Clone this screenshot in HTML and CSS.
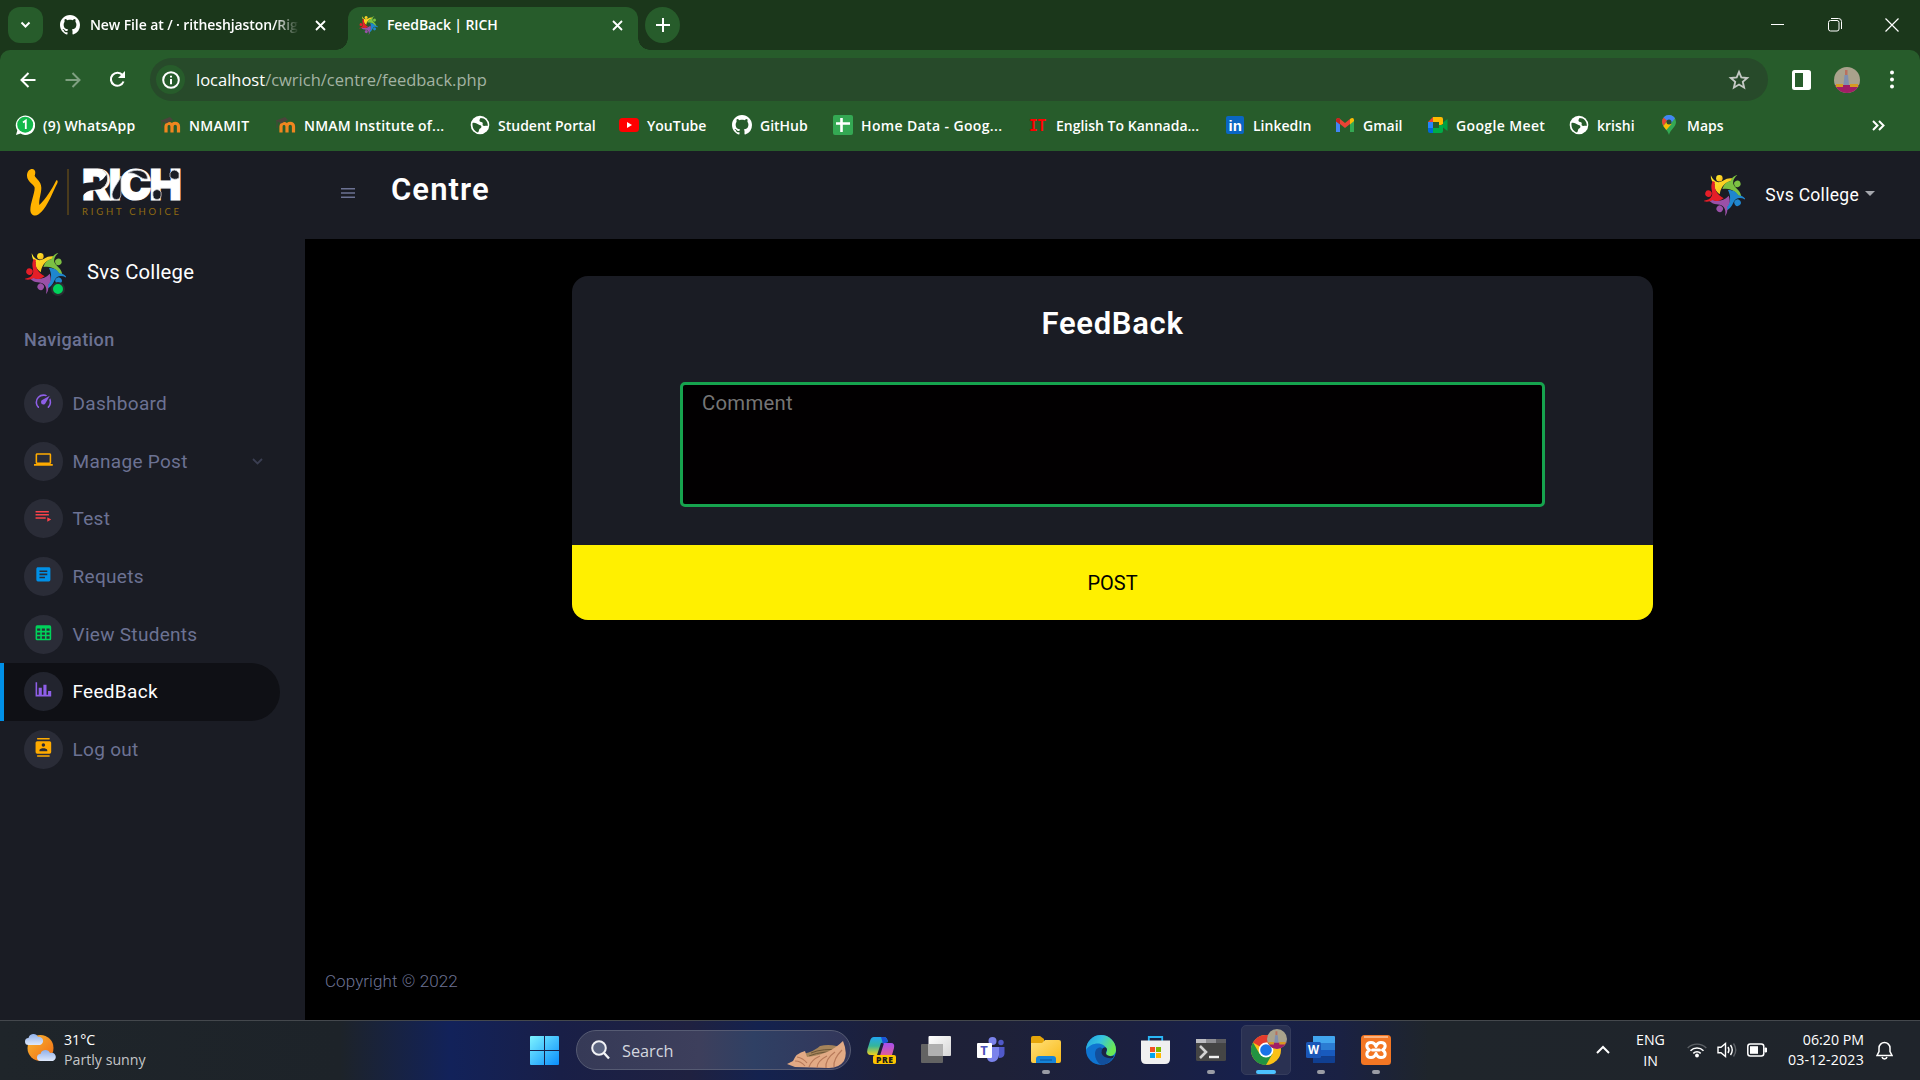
FILE: index.html
```html
<!DOCTYPE html>
<html lang="en">
<head>
<meta charset="utf-8">
<title>FeedBack | RICH</title>
<link rel="stylesheet" href="styles.css">
</head>
<body>
<svg class="defs" width="0" height="0" aria-hidden="true">
  <defs>
    <linearGradient id="gYellow" x1="0" y1="0" x2="1" y2="1"><stop offset="0" stop-color="#fff02a"/><stop offset="1" stop-color="#f5b21c"/></linearGradient>
    <linearGradient id="gStart" x1="0" y1="0" x2="1" y2="1"><stop offset="0" stop-color="#7df3ff"/><stop offset="1" stop-color="#0a8dfb"/></linearGradient>
    <linearGradient id="gSun" x1="0" y1="0" x2="1" y2="1"><stop offset="0" stop-color="#f7b733"/><stop offset="1" stop-color="#f26a12"/></linearGradient>
    <linearGradient id="gCloud" x1="0" y1="0" x2="0" y2="1"><stop offset="0" stop-color="#8fb0ea"/><stop offset="1" stop-color="#dfe9fb"/></linearGradient>
    <linearGradient id="gFolder" x1="0" y1="0" x2="1" y2="1"><stop offset="0" stop-color="#ffe07a"/><stop offset="1" stop-color="#f9b916"/></linearGradient>
    <linearGradient id="gEdge" x1="0" y1="0" x2="1" y2="0.4"><stop offset="0" stop-color="#1f9fdf"/><stop offset=".5" stop-color="#35c3e0"/><stop offset="1" stop-color="#6be854"/></linearGradient>
    <linearGradient id="gCopA" x1="0" y1="0" x2="0" y2="1"><stop offset="0" stop-color="#22a6f0"/><stop offset=".5" stop-color="#35b59a"/><stop offset="1" stop-color="#f0d21c"/></linearGradient>
    <linearGradient id="gCopB" x1="0" y1="0" x2="0" y2="1"><stop offset="0" stop-color="#a64ff0"/><stop offset="1" stop-color="#f2607e"/></linearGradient>
    <linearGradient id="gView" x1="0" y1="0" x2="1" y2="1"><stop offset="0" stop-color="#ffffff"/><stop offset="1" stop-color="#d6d6d6"/></linearGradient>
    <path id="person" d="M20 1C25 13 32 20 42 21C56 21 62 7 84 10L83 17C66 20 50 30 46 56C32 46 29 36 31 27C24 20 19 12 20 1Z"/>
  </defs>
  <symbol id="ring" viewBox="0 0 120 120">
    <g fill="url(#gYellow)"><use href="#person"/><circle cx="45" cy="9.500" r="9.500"/></g>
    <g fill="#7cc142" transform="rotate(72 60 54)"><use href="#person"/><circle cx="45" cy="9.500" r="9.500"/></g>
    <g fill="#1f86cf" transform="rotate(144 60 54)"><use href="#person"/><circle cx="45" cy="9.500" r="9.500"/></g>
    <g fill="#9a50a8" transform="rotate(216 60 54)"><use href="#person"/><circle cx="45" cy="9.500" r="9.500"/></g>
    <g fill="#e61e28" transform="rotate(288 60 54)"><use href="#person"/><circle cx="45" cy="9.500" r="9.500"/></g>
  </symbol>
  <symbol id="github" viewBox="0 0 16 16"><path fill="#fff" d="M8 0C3.580 0 0 3.580 0 8c0 3.540 2.290 6.530 5.470 7.590.4.070.55-.17.55-.38 0-.19-.01-.82-.01-1.490-2.010.37-2.530-.49-2.690-.94-.09-.23-.48-.94-.82-1.130-.28-.15-.68-.52-.01-.53.63-.01 1.080.58 1.230.82.72 1.210 1.870.87 2.330.66.070-.52.280-.87.510-1.070-1.780-.2-3.640-.89-3.640-3.950 0-.87.310-1.590.82-2.150-.08-.2-.36-1.020.08-2.120 0 0 .67-.21 2.200.82.640-.18 1.320-.27 2-.27s1.360.09 2 .27c1.530-1.040 2.200-.82 2.200-.82.440 1.100.160 1.920.080 2.120.510.560.820 1.270.820 2.150 0 3.070-1.870 3.750-3.650 3.950.290.250.540.730.540 1.480 0 1.070-.01 1.930-.01 2.200 0 .21.150.46.550.38A8.010 8.010 0 0 0 16 8c0-4.420-3.580-8-8-8z"/></symbol>
  <symbol id="moodle" viewBox="0 0 20 20"><path d="M5 17.500V11.500A2.900 2.900 0 0 1 11 11.500V17.500M11 17.500V11.500A2.900 2.900 0 0 1 17.500 11.500V17.500" fill="none" stroke="#f0861f" stroke-width="3.200"/><path d="M0 5.500L9 2L12 5L5 8.500Z" fill="#4a443b"/><path d="M1 5V13" stroke="#4a443b"/></symbol>
  <symbol id="globe" viewBox="0 0 20 20"><circle cx="10" cy="10" r="9.300" fill="#fff"/><path d="M2.500 8C5 7 7 9 9.500 10C12 10 12 13 10 13.500C8.500 14 9.500 16 8 17.500C4.500 16.500 2 13 2.500 8ZM10.500 3C9 5 9 6.500 11 7C13 7 13 8.500 12.500 10C14 12 16 10 17.800 11C18 6.500 15 3 10.500 3Z" fill="#275c2b"/></symbol>
  <symbol id="face" viewBox="0 0 26 26"><clipPath id="cf"><circle cx="13" cy="13" r="13"/></clipPath><g clip-path="url(#cf)"><path fill="#a9a28c" d="M0 0H26V26H0Z"/><path fill="#b9705f" d="M11 3H13.500V8H11Z"/><path fill="#7f8fb0" d="M10.500 8H14L15 18H9.500Z"/><path fill="#a01e66" d="M0 18H26V26H0Z"/><path fill="#d69a22" d="M2 17H9V20H2ZM16 17H24V20H16Z"/></g></symbol>
</svg>

<header class="browser">
  <div class="tabstrip">
    <span class="tab-search"><svg width="11" height="8" viewBox="0 0 11 8"><path d="M1.500 1.500L5.500 5.500L9.500 1.500" fill="none" stroke="#fff" stroke-width="2"/></svg></span>
    <div class="tab tab-idle">
      <svg width="20" height="20"><use href="#github"/></svg>
      <span class="tab-title faded">New File at / · ritheshjaston/Rig</span>
      <svg class="x" width="11" height="11" viewBox="0 0 11 11"><path d="M1 1L10 10M10 1L1 10" stroke="#fff" stroke-width="1.800"/></svg>
    </div>
    <div class="tab tab-active">
      <svg width="19" height="19"><use href="#ring"/></svg>
      <span class="tab-title">FeedBack | RICH</span>
      <svg class="x" width="11" height="11" viewBox="0 0 11 11"><path d="M1 1L10 10M10 1L1 10" stroke="#fff" stroke-width="1.800"/></svg>
    </div>
    <span class="tab-new"><svg width="14" height="14" viewBox="0 0 14 14"><path d="M7 0V14M0 7H14" stroke="#fff" stroke-width="2"/></svg></span>
    <div class="window-controls">
      <svg width="14" height="14" viewBox="0 0 14 14"><path d="M0 6.500H13" stroke="#fff"/></svg>
      <svg width="14" height="14" viewBox="0 0 14 14"><rect x=".5" y="2.500" width="10.500" height="10.500" rx="2" fill="none" stroke="#fff"/><path d="M3 .5H10.500Q13.500 .5 13.500 3.500V11" fill="none" stroke="#fff"/></svg>
      <svg width="14" height="14" viewBox="0 0 14 14"><path d="M.5 .5L13.500 13.500M13.500 .5L.5 13.500" stroke="#fff" stroke-width="1.200"/></svg>
    </div>
  </div>

  <div class="toolbar">
    <svg width="16" height="16" viewBox="0 0 16 16"><path d="M8.500 1L1.500 8L8.500 15M1.500 8H15.500" fill="none" stroke="#fff" stroke-width="2"/></svg>
    <svg width="16" height="16" viewBox="0 0 16 16"><path d="M7.500 1L14.500 8L7.500 15M14.500 8H.5" fill="none" stroke="#7fa081" stroke-width="2"/></svg>
    <svg width="17" height="17" viewBox="0 0 17 17"><path d="M14.500 10.500A6.500 6.500 0 1 1 13.500 4.200L15 6" fill="none" stroke="#fff" stroke-width="2.100"/><path d="M16 0V7H9Z" fill="#fff"/></svg>
    <div class="omnibox">
      <span class="site-info"><svg width="18" height="18" viewBox="0 0 18 18"><circle cx="9" cy="9" r="7.800" fill="none" stroke="#fff" stroke-width="2"/><path d="M9 8V13.200M9 4.700V6.600" stroke="#fff" stroke-width="2"/></svg></span>
      <span class="url"><b>localhost</b>/cwrich/centre/feedback.php</span>
      <svg class="star" width="22" height="22" viewBox="0 0 24 24"><path d="M12 3.200L14.500 9.200L21 9.800L16.100 14L17.600 20.400L12 17L6.400 20.400L7.900 14L3 9.800L9.500 9.200Z" fill="none" stroke="#c4c9c4" stroke-width="2"/></svg>
    </div>
    <svg width="19" height="20" viewBox="0 0 19 20"><rect width="19" height="20" rx="2.500" fill="#fff"/><path d="M3 3H11V17H3Z" fill="#275c2b"/></svg>
    <svg width="26" height="26"><use href="#face"/></svg>
    <svg width="4" height="19" viewBox="0 0 4 19"><g fill="#fff"><circle cx="2" cy="2.500" r="2"/><circle cx="2" cy="9.500" r="2"/><circle cx="2" cy="16.500" r="2"/></g></svg>
  </div>

  <nav class="bookmarks">
    <a class="wide"><svg width="20" height="20" viewBox="0 0 20 20"><path d="M1 20L2.300 15.500A9.700 9.700 0 1 1 5.500 18.600Z" fill="#fff"/><circle cx="10.200" cy="9.700" r="8" fill="#12b84a"/><path d="M8 7.500L10.800 5.500V14" fill="none" stroke="#fff" stroke-width="1.800"/></svg><span>(9) WhatsApp</span></a>
    <a class="wider"><svg width="20" height="20"><use href="#moodle"/></svg><span>NMAMIT</span></a>
    <a class="wide"><svg width="20" height="20"><use href="#moodle"/></svg><span>NMAM Institute of...</span></a>
    <a><svg width="20" height="20"><use href="#globe"/></svg><span>Student Portal</span></a>
    <a><svg width="20" height="20" viewBox="0 0 20 20"><rect y="3" width="20" height="14" rx="3.500" fill="#f00"/><path d="M8 7L13 10L8 13Z" fill="#fff"/></svg><span>YouTube</span></a>
    <a><svg width="20" height="20"><use href="#github"/></svg><span>GitHub</span></a>
    <a class="wider"><svg width="20" height="20" viewBox="0 0 20 20"><rect width="20" height="20" rx="2" fill="#34a853"/><path d="M8.500 3V17M3 8.500H17" stroke="#fff" stroke-width="2.600"/></svg><span>Home Data - Goog...</span></a>
    <a><svg width="20" height="20" viewBox="0 0 20 20"><text x="1" y="16" font-family="Liberation Mono" font-weight="700" font-size="18" textLength="17" lengthAdjust="spacingAndGlyphs" fill="#f00">IT</text></svg><span>English To Kannada...</span></a>
    <a><svg width="20" height="20" viewBox="0 0 20 20"><rect x="1" y="1" width="18" height="18" rx="2" fill="#0a66c2"/><text x="3.500" y="15.500" font-family="Liberation Sans" font-weight="700" font-size="15" fill="#fff">in</text></svg><span>LinkedIn</span></a>
    <a><svg width="20" height="20" viewBox="0 0 20 20"><path d="M1 5V17H5V9Z" fill="#4285f4"/><path d="M19 5V17H15V9Z" fill="#34a853"/><path d="M1 4.500Q3 2 5 4L10 8L15 4V9L10 13L5 9L1 6Z" fill="#ea4335"/><path d="M15 4Q18 2 19 4.500V6L15 9.500Z" fill="#fbbc04"/><path d="M1 4.500Q3 2 5 4V9.500L1 6.500Z" fill="#c5221f"/></svg><span>Gmail</span></a>
    <a class="wider"><svg width="20" height="20" viewBox="0 0 20 20"><path d="M0 7H5V13H0Z" fill="#2684fc"/><path d="M5 2V7H0Z" fill="#ea4335"/><path d="M5 2H13Q15 2 15 4V9L11 11V7H5Z" fill="#ffba00"/><path d="M0 13H5V18H2Q0 18 0 16Z" fill="#0066da"/><path d="M5 13H11V10H15V16Q15 18 13 18H5Z" fill="#00ac47"/><path d="M15 7.500L19.500 4V16L15 12.500Z" fill="#00a043"/></svg><span>Google Meet</span></a>
    <a><svg width="20" height="20"><use href="#globe"/></svg><span>krishi</span></a>
    <a><svg width="20" height="20" viewBox="0 0 20 20"><path d="M10 20C9 15 3 12 3 7A7 7 0 0 1 17 7C17 12 11 15 10 20Z" fill="#34a853"/><path d="M4.500 2.700A7 7 0 0 1 16 3.300L11 9.500L7 5.500Z" fill="#4285f4"/><path d="M4.500 2.700L8 5.500L4.500 11C2.500 8 2.500 5 4.500 2.700Z" fill="#ea4335"/><path d="M4.300 11L9 5.500L12.500 9L7.300 15Z" fill="#fbbc04"/><circle cx="10" cy="7" r="2.500" fill="#2b4b35"/></svg><span>Maps</span></a>
    <svg class="more" width="13" height="11" viewBox="0 0 13 11"><path d="M1 1L5.500 5.500L1 10M7 1L11.500 5.500L7 10" fill="none" stroke="#fff" stroke-width="2"/></svg>
  </nav>
</header>

<div class="app">
  <aside class="sidebar">
    <div class="brand">
      <svg class="mark" width="44" height="50" viewBox="0 0 132 150"><path fill="#ffb300" d="M22 3C31 5 33 13 29 23C33 33 49 39 49 59C49 77 41 93 43 111C63 93 81 63 94 37C100 35 99 45 93 53C77 87 63 123 41 139C29 147 16 141 16 125C16 105 29 77 29 59C29 51 6 41 6 23C6 11 13 3 22 3Z"/><path d="M129 3V141" stroke="#7a5a14" stroke-width="3"/></svg>
      <div class="wordmark">
        <span class="rich">RICH</span>
        <span class="tagline">RIGHT CHOICE</span>
        <svg class="inlay" width="98" height="33" viewBox="0 0 98 33"><g fill="#1a1c24" stroke="#c9cbd0" stroke-width=".8"><path d="M0 16C6 13 16 16 21 11L25 6Q27 16 19 21L12 22Q4 22 0 29Z" stroke="none"/><path d="M20 1.500Q27 6 25.500 14Q24 19 19 21" fill="none"/><path d="M39 8V25Q39 31.500 34.500 31.500Q30 31.500 30 26C32 18 36 16 39 8Z"/><path d="M46 5C53 0 66 2 65.500 11C58 12 56 4 46 5Z"/><path d="M71 24Q75 19 79 24Q80 31.500 75 31.500Q70 31.500 71 24Z"/><path d="M88 9V5Q92 -1 97 5V10Q92 13 88 9Z"/></g></svg>
      </div>
    </div>
    <div class="profile">
      <span class="avatar"><svg width="41" height="41"><use href="#ring"/></svg><i class="online"></i></span>
      <span class="name">Svs College</span>
    </div>
    <p class="nav-head">Navigation</p>
    <ul class="menu">
      <li><span class="ico violet"><svg viewBox="0 0 24 24"><path d="M12,16A3,3 0 0,1 9,13C9,11.880 9.610,10.900 10.500,10.390L20.210,4.770L14.680,14.350C14.180,15.330 13.170,16 12,16M12,3C13.810,3 15.500,3.500 16.970,4.320L14.870,5.530C14,5.190 13,5 12,5A8,8 0 0,0 4,13C4,15.210 4.890,17.210 6.340,18.650H6.350C6.740,19.040 6.740,19.670 6.350,20.060C5.960,20.450 5.320,20.450 4.930,20.070V20.070C3.120,18.260 2,15.760 2,13A10,10 0 0,1 12,3M22,13C22,15.760 20.880,18.260 19.070,20.070V20.070C18.680,20.450 18.050,20.450 17.660,20.060C17.270,19.670 17.270,19.040 17.660,18.650V18.650C19.110,17.200 20,15.210 20,13C20,12 19.810,11 19.460,10.100L20.670,8C21.500,9.500 22,11.180 22,13Z"/></svg></span><span>Dashboard</span></li>
      <li><span class="ico amber"><svg viewBox="0 0 24 24"><path d="M4,6H20V16H4M20,18A2,2 0 0,0 22,16V6C22,4.890 21.100,4 20,4H4C2.890,4 2,4.890 2,6V16A2,2 0 0,0 4,18H0V20H24V18H20Z"/></svg></span><span>Manage Post</span><svg class="arrow" width="11" height="7" viewBox="0 0 11 7"><path d="M1 1L5.500 5.500L10 1" fill="none" stroke="#3b3e52" stroke-width="1.800"/></svg></li>
      <li><span class="ico red"><svg viewBox="0 0 24 24"><path d="M19,9H2V11H19V9M19,5H2V7H19V5M2,15H15V13H2V15M17,13V19L22,16L17,13Z"/></svg></span><span>Test</span></li>
      <li><span class="ico blue"><svg viewBox="0 0 24 24"><path d="M14,17H7V15H14M17,13H7V11H17M17,9H7V7H17M19,3H5C3.890,3 3,3.890 3,5V19A2,2 0 0,0 5,21H19A2,2 0 0,0 21,19V5C21,3.890 20.100,3 19,3Z"/></svg></span><span>Requets</span></li>
      <li><span class="ico green"><svg viewBox="0 0 24 24"><path d="M4,3H20A2,2 0 0,1 22,5V20A2,2 0 0,1 20,22H4A2,2 0 0,1 2,20V5A2,2 0 0,1 4,3M4,7V10H8V7H4M10,7V10H14V7H10M20,10V7H16V10H20M4,12V15H8V12H4M4,20H8V17H4V20M10,12V15H14V12H10M10,20H14V17H10V20M20,20V17H16V20H20M20,12H16V15H20V12Z"/></svg></span><span>View Students</span></li>
      <li class="active"><span class="ico violet"><svg viewBox="0 0 24 24"><path d="M22,21H2V3H4V19H6V10H10V19H12V6H16V19H18V14H22V21Z"/></svg></span><span>FeedBack</span></li>
      <li><span class="ico amber"><svg viewBox="0 0 24 24"><path d="M20,0H4V2H20V0M4,24H20V22H4V24M20,4H4A2,2 0 0,0 2,6V18A2,2 0 0,0 4,20H20A2,2 0 0,0 22,18V6A2,2 0 0,0 20,4M12,6.750A2.250,2.250 0 0,1 14.250,9A2.250,2.250 0 0,1 12,11.250A2.250,2.250 0 0,1 9.750,9A2.250,2.250 0 0,1 12,6.750M17,17H7V15.500C7,13.830 10.330,13 12,13C13.670,13 17,13.830 17,15.500V17Z"/></svg></span><span>Log out</span></li>
    </ul>
  </aside>
  <div class="content">
    <div class="topbar">
      <svg class="burger" width="14" height="10" viewBox="0 0 14 10"><path d="M0 .75H14M0 5H14M0 9.250H14" stroke="#6c7293" stroke-width="1.500"/></svg>
      <h1>Centre</h1>
      <div class="user">
        <svg width="41" height="41"><use href="#ring"/></svg>
        <span class="user-name">Svs College</span>
        <i class="caret"></i>
      </div>
    </div>
    <main>
      <form class="card">
        <h2>FeedBack</h2>
        <div class="comment"><span>Comment</span></div>
        <div class="post"><span>POST</span></div>
      </form>
      <footer><span>Copyright © 2022</span></footer>
    </main>
  </div>
</div>

<div class="taskbar">
  <div class="weather">
    <svg width="31" height="30" viewBox="0 0 31 30"><circle cx="15.500" cy="15" r="13" fill="url(#gSun)"/><path d="M3.500 12A3.500 3.500 0 0 1 3.500 5A5 5 0 0 1 13 4A4 4 0 0 1 15 12Z" fill="url(#gCloud)"/><path d="M15.500 28A3.500 3.500 0 0 1 15.500 21A5 5 0 0 1 25 20A4 4 0 0 1 28 28Z" fill="url(#gCloud)"/></svg>
    <div class="weather-text"><span>31°C</span><span class="dim">Partly sunny</span></div>
  </div>
  <div class="dock">
    <svg class="start" width="29" height="29" viewBox="0 0 29 29"><path fill="url(#gStart)" d="M1 0H14V14H0V1Q0 0 1 0ZM15 0H28Q29 0 29 1V14H15ZM0 15H14V29H1Q0 29 0 28ZM15 15H29V28Q29 29 28 29H15Z"/></svg>
    <div class="search">
      <svg width="19" height="20" viewBox="0 0 19 20"><circle cx="8" cy="8" r="6.800" fill="#5b6480" stroke="#f2f3f6" stroke-width="2"/><path d="M13 13L18 18.500" stroke="#f2f3f6" stroke-width="2.400"/></svg>
      <span class="search-text">Search</span>
      <svg class="shells" width="60" height="28" viewBox="0 0 60 28"><path d="M16 13Q28 10 33 5Q45 2 58 8L56 20H20Z" fill="#a5835a"/><path d="M24 12Q35 7 55 9M22 15Q36 9 55 12" stroke="#6d5638" fill="none"/><path d="M0 23L6 20Q9 12 18 10L20 16Q42 14 56 0Q61 12 57 20Q52 27 42 27L8 26Z" fill="#e2aa85"/><path d="M8 20Q14 20 18 25M10 16Q16 17 20 22M22 26Q24 19 33 15M30 27Q30 20 40 15M39 27Q38 18 48 11M47 26Q46 18 55 9" stroke="#b87a5a" stroke-width="1.200" fill="none"/></svg>
    </div>
    <div class="app-icon"><svg width="30" height="30" viewBox="0 0 30 30"><path d="M8 2H18Q21 2 22 7L15 8L11 20H5Q0 20 1.500 14L4 6Q5 2 8 2Z" fill="url(#gCopA)"/><path d="M15 2H18Q21 2 22 7L17 9Z" fill="#1b55d8"/><path d="M18 8H25Q29 8 28 13L26 20Q25 24 20 24H13Z" fill="url(#gCopB)"/><rect x="7" y="20" width="23" height="9" rx="2" fill="#fdc400"/><text x="10" y="27.500" font-family="Open Sans" font-weight="800" font-size="8.500" textLength="17" fill="#1a1a1a">PRE</text></svg></div>
    <div class="app-icon"><svg width="30" height="30" viewBox="0 0 30 30"><rect y="9" width="22" height="19" rx="1" fill="#636363"/><rect x="7.500" y="1" width="22.500" height="20" rx="1" fill="url(#gView)"/><path d="M7.500 9H22V21H7.500Z" fill="#b0b0b0"/></svg></div>
    <div class="app-icon"><svg width="28" height="28" viewBox="0 0 28 28"><circle cx="15.500" cy="5" r="4" fill="#7b83eb"/><circle cx="24" cy="6.500" r="2.700" fill="#5059c9"/><path d="M20 11H27.500V18Q27 22 22 22Z" fill="#5059c9"/><path d="M10 11H22V19Q21 26 15 26Q11 26 10 22Z" fill="#7b83eb"/><rect x="0" y="7" width="15" height="15" rx="1" fill="#fff"/><text x="3.300" y="19" font-family="Open Sans" font-weight="700" font-size="13" fill="#4b53bc">T</text></svg></div>
    <div class="app-icon open"><svg width="30" height="30" viewBox="0 0 30 30"><path d="M0 3Q0 1 2 1H9L13 4V12H0Z" fill="#e5a50a"/><path d="M0 8H11L14 5H28Q30 5 30 7V26Q30 28 28 28H2Q0 28 0 26Z" fill="url(#gFolder)"/><path d="M5 28V24Q5 21 8 21H22Q25 21 25 24V28Z" fill="#1583d8"/><path d="M9 25H21" stroke="#0b5ba8" stroke-width="1.300"/></svg></div>
    <div class="app-icon"><svg width="30" height="30" viewBox="0 0 30 30"><circle cx="15" cy="15" r="15" fill="#0f74d1"/><path d="M0 15A15 15 0 0 1 30 15C30 19 26 22 22 21C18 20 21 18 21 15C19 7 6 6 0 15Z" fill="url(#gEdge)"/><path d="M9 19C9 12 15 11 17 14C13 18 20 26 28 21Q23 30 15 30Q9 26 9 19Z" fill="#124f9c"/><path d="M17 13Q21 11 21 15Q19 18 21 20Q24 22 28 20.500L27 23Q17 24 15.500 18Q15 15 17 13Z" fill="#1b2444"/></svg></div>
    <div class="app-icon"><svg width="29" height="30" viewBox="0 0 29 30"><path d="M7.800 7V2H21.200V7" fill="none" stroke="#29b6f6" stroke-width="1.800"/><path d="M0 5.500H29V24Q29 29 24 29H5Q0 29 0 24Z" fill="#f0f0f0"/><path d="M9 12H14V17H9Z" fill="#f25022"/><path d="M15 12H20V17H15Z" fill="#7fba00"/><path d="M9 18H14V23H9Z" fill="#00a4ef"/><path d="M15 18H20V23H15Z" fill="#ffb900"/></svg></div>
    <div class="app-icon open"><svg width="30" height="30" viewBox="0 0 30 30"><rect y="4" width="30" height="22" rx="1.500" fill="#454545"/><path d="M0 4H10V8H0Z" fill="#bdbdc2"/><path d="M10 4H20V8H10Z" fill="#8d8d92"/><path d="M20 4H30V8H20Z" fill="#5d5d62"/><path d="M4 11L10 17L4 23" fill="none" stroke="#d2d2d2" stroke-width="2.600"/><path d="M13 22H23" stroke="#f0f0f0" stroke-width="2.400"/></svg></div>
    <div class="app-icon current"><svg width="30" height="30" viewBox="0 0 30 30"><circle cx="15" cy="15" r="15" fill="#fbc116"/><path d="M15 15L2 7.500A15 15 0 0 1 28 7.500H15Z" fill="#e33b2e"/><path d="M2 7.500A15 15 0 0 0 15 30L21.500 18.700L8.500 18.700Z" fill="#229342"/><circle cx="15" cy="15" r="7.400" fill="#fff"/><circle cx="15" cy="15" r="5.800" fill="#1a73e8"/></svg><svg class="badge" width="20" height="20"><use href="#face"/></svg></div>
    <div class="app-icon open"><svg width="30" height="30" viewBox="0 0 30 30"><path d="M7 1H28Q29 1 29 2V8H7Z" fill="#41a5ee"/><path d="M7 8H29V15H7Z" fill="#2b7cd3"/><path d="M7 15H29V21.500H7Z" fill="#185abd"/><path d="M7 21.500H29V27Q29 28 28 28H7Z" fill="#103f91"/><rect y="7" width="15" height="16" rx="1.500" fill="#1a57b8"/><text x="2" y="19" font-family="Open Sans" font-weight="700" font-size="11.500" fill="#fff">W</text></svg></div>
    <div class="app-icon open"><svg width="30" height="30" viewBox="0 0 30 30"><rect width="30" height="30" rx="3.500" fill="#f37623"/><path d="M3 2H27" stroke="#fbb27f" stroke-width="2"/><path d="M15 11.500C14 8.500 12.500 7.500 10 7.500C5 7.500 4.500 12.500 8.500 15C4.500 17.500 5 22.500 10 22.500C12.500 22.500 14 21.500 15 18.500C16 21.500 17.500 22.500 20 22.500C25 22.500 25.500 17.500 21.500 15C25.500 12.500 25 7.500 20 7.500C17.500 7.500 16 8.500 15 11.500ZM11.500 15H18.500" fill="none" stroke="#fff" stroke-width="3" stroke-linejoin="round" stroke-linecap="round"/></svg></div>
  </div>
  <div class="tray">
    <svg width="14" height="9" viewBox="0 0 14 9"><path d="M1 8L7 2L13 8" fill="none" stroke="#fff" stroke-width="2"/></svg>
    <div class="lang"><span>ENG</span><span>IN</span></div>
    <svg class="wifi" width="20" height="16" viewBox="0 0 20 16"><path d="M.7 6A13 13 0 0 1 19.300 6" fill="none" stroke="#5d6166" stroke-width="1.400"/><path d="M3.500 8.700A9.300 9.300 0 0 1 16.500 8.700M6.300 11.300A5.500 5.500 0 0 1 13.700 11.300" fill="none" stroke="#fff" stroke-width="1.600"/><circle cx="10" cy="13.500" r="1.900" fill="#fff"/></svg>
    <svg class="vol" width="21" height="16" viewBox="0 0 21 16"><path d="M1 5.300H4L8.500 1.500V14.500L4 10.700H1Z" fill="none" stroke="#fff" stroke-width="1.400"/><path d="M11 5Q13 8 11 11M13.500 3Q17 8 13.500 13" fill="none" stroke="#fff" stroke-width="1.400"/><path d="M16.500 1.500Q21 8 16.500 14.500" fill="none" stroke="#5d6166" stroke-width="1.400"/></svg>
    <svg class="bat" width="20" height="14" viewBox="0 0 20 14"><rect x=".8" y="1" width="16" height="12" rx="2.500" fill="none" stroke="#fff" stroke-width="1.500"/><path d="M3 3.200H11V10.800H3Z" fill="#fff"/><path d="M18 5H19.500V9H18Z" fill="#fff" stroke="#fff"/></svg>
    <div class="clock"><span>06:20 PM</span><span>03-12-2023</span></div>
    <svg class="bell" width="17" height="19" viewBox="0 0 17 19"><path d="M1 14.500L3 10.500V7A5.500 5.500 0 0 1 14 7V10.500L16 14.500Z" fill="none" stroke="#fff" stroke-width="1.500"/><path d="M6 16A2.600 2.600 0 0 0 11 16" fill="none" stroke="#fff" stroke-width="1.500"/></svg>
  </div>
</div>
</body>
</html>
```
FILE: styles.css
```css
* { box-sizing: border-box; }
body {
  margin: 0;
  width: 1920px;
  height: 1080px;
  overflow: hidden;
  display: flex;
  flex-direction: column;
  background: #000;
  font-family: Roboto, sans-serif;
  color: #fff;
}
svg { display: block; flex: none; }
.defs { position: absolute; }

/* Browser chrome */
.browser {
  flex: 0 0 151px;
  background: #1b371b;
  font-family: "Open Sans", sans-serif;
  font-size: 14px;
  font-weight: 600;
}
.tabstrip { display: flex; height: 50px; padding: 7px 21px 0 8px; }
.tab-search, .tab-new {
  display: flex;
  align-items: center;
  justify-content: center;
  width: 35px;
  height: 36px;
  border-radius: 12px;
  background: #275c2b;
}
.tab-new { border-radius: 50%; margin-left: 7px; }
.tab { display: flex; align-items: center; height: 43px; padding-bottom: 7px; }
.tab .x { margin-left: auto; }
.tab-title { white-space: nowrap; line-height: 20px; letter-spacing: -.1px; }
.tab-idle { width: 305px; padding-left: 17px; padding-right: 22px; gap: 10px; }
.faded {
  width: 209px;
  overflow: hidden;
  -webkit-mask-image: linear-gradient(90deg, #000 88%, transparent);
  mask-image: linear-gradient(90deg, #000 88%, transparent);
}
.tab-active {
  position: relative;
  width: 290px;
  padding-left: 11px;
  padding-right: 15px;
  gap: 9px;
  border-radius: 12px 12px 0 0;
  background: #275c2b;
}
.tab-active::before, .tab-active::after {
  content: "";
  position: absolute;
  bottom: 0;
  width: 12px;
  height: 12px;
}
.tab-active::before { left: -12px; background: radial-gradient(circle at 0 0, transparent 11.500px, #275c2b 12px); }
.tab-active::after { right: -12px; background: radial-gradient(circle at 100% 0, transparent 11.500px, #275c2b 12px); }
.window-controls { display: flex; gap: 43px; margin-left: auto; padding-top: 11px; }

.toolbar {
  display: flex;
  align-items: center;
  height: 51px;
  padding: 8px 26px 0 20px;
  border-radius: 10px 10px 0 0;
  background: #275c2b;
}
.toolbar > svg:nth-child(2) { margin-left: 29px; }
.toolbar > svg:nth-child(3) { margin-left: 28px; }
.omnibox {
  display: flex;
  align-items: center;
  width: 1620px;
  height: 43px;
  margin: 0 24px 0 24px;
  padding: 0 18px 0 7px;
  border-radius: 22px;
  background: #274a2a;
}
.site-info {
  display: flex;
  align-items: center;
  justify-content: center;
  width: 29px;
  height: 29px;
  margin-left: -1px;
  border-radius: 50%;
  background: #275c2b;
}
.url { margin-left: 11px; font-size: 16.500px; font-weight: 400; color: #a3b3a3; }
.url b { font-weight: 400; color: #fff; }
.star { margin-left: auto; }
.toolbar .omnibox ~ svg { margin-right: 23px; }
.toolbar .omnibox ~ svg:last-child { margin: 0 0 0 7px; }

.bookmarks {
  display: grid;
  grid-template-columns: 146px 115px 194px 149px 113px 101px 195px 197px 110px 93px 141px 90px 213px 13px;
  align-items: center;
  height: 50px;
  padding: 0 0 2px 15px;
  background: #275c2b;
}
.bookmarks a { display: flex; align-items: center; gap: 8px; white-space: nowrap; }
.wide { letter-spacing: .22px; }
.wider { letter-spacing: .37px; }

/* Application */
.app { display: flex; height: 869px; }
.sidebar { flex: 0 0 305px; background: #1a1c24; }
.brand { display: flex; gap: 13px; height: 88px; padding: 17px 0 0 25px; }
.wordmark { position: relative; display: flex; flex-direction: column; width: 98px; }
.rich { height: 33px; line-height: 33px; font-family: Inter, sans-serif; font-weight: 900; font-size: 43px; letter-spacing: -2px; -webkit-text-stroke: 1.200px #fff; }
.tagline { margin-top: 6px; line-height: 10px; font-family: Lato, sans-serif; font-size: 9.500px; letter-spacing: 2.800px; color: #8f6a12; white-space: nowrap; }
.inlay { position: absolute; left: 0; top: 0; }
.profile { display: flex; align-items: center; gap: 21px; padding: 14px 0 0 25px; height: 55px; }
.avatar { position: relative; }
.online {
  position: absolute;
  left: 26px;
  top: 29px;
  width: 14px;
  height: 14px;
  border: 2px solid #2a2e33;
  border-radius: 50%;
  background: #00d25b;
}
.name { margin-top: -4px; font-size: 20.300px; line-height: 24px; letter-spacing: .2px; }
.nav-head { margin: 36px 0 0 24px; line-height: 20px; font-size: 18px; letter-spacing: .4px; font-weight: 500; color: #6c7293; }
.menu { margin: 25px 0 0; padding: 0; list-style: none; }
.menu li {
  display: flex;
  align-items: center;
  gap: 9.500px;
  width: 280px;
  height: 57.600px;
  padding-left: 24px;
  font-size: 19px;
  letter-spacing: .3px;
  color: #6c7293;
}
.menu li.active {
  padding-left: 20px;
  border-left: 4px solid #0090e7;
  border-radius: 0 29px 29px 0;
  background: #0f1015;
  color: #fff;
}
.ico {
  display: flex;
  justify-content: center;
  width: 39px;
  height: 39px;
  padding-top: 8px;
  border-radius: 50%;
  background: #2a2c37;
}
.active .ico { background: #22242e; }
.ico svg { width: 18.750px; height: 18.750px; fill: currentColor; }
.violet { color: #8f5fe8; }
.amber { color: #ffab00; }
.red { color: #fc424a; }
.blue { color: #0090e7; }
.green { color: #00d25b; }
.arrow { margin-left: auto; margin-right: 17px; }

.content { flex: 1; display: flex; flex-direction: column; }
.topbar { display: flex; align-items: center; height: 88px; padding: 0 45px 0 36px; background: #1a1c24; }
.burger { margin-top: -4px; }
.topbar h1 { margin: -10px 0 0 36px; font-size: 31px; line-height: 36px; font-weight: 600; letter-spacing: 1.100px; }
.user { display: flex; align-items: center; margin-left: auto; }
.user-name { margin-left: 20px; font-size: 17.500px; letter-spacing: .3px; }
.caret { margin: -4px 0 0 6px; border: 5px solid transparent; border-top-color: #a5a7ad; border-bottom: 0; }
main { flex: 1; display: flex; flex-direction: column; align-items: center; }
.card {
  display: flex;
  flex-direction: column;
  align-items: center;
  width: 1081px;
  height: 344px;
  margin: 37px 0 0 0;
  border-radius: 16px;
  overflow: hidden;
  background: #1a1c24;
}
.card h2 { margin: 30px 0 0; font-size: 31px; line-height: 36px; font-weight: 600; letter-spacing: .7px; }
.comment {
  width: 865px;
  height: 125px;
  margin-top: 40px;
  padding: 6px 19px;
  border: 3px solid #16a34e;
  border-radius: 5px;
  background: #020001;
  font-size: 20.300px;
  line-height: 24px;
  letter-spacing: .3px;
  color: #757575;
}
.post {
  display: flex;
  align-items: center;
  justify-content: center;
  align-self: stretch;
  height: 75px;
  margin-top: auto;
  background: #fff000;
  color: #000;
  font-size: 20px;
}
footer { align-self: flex-start; margin: auto 0 0 20px; padding-bottom: 29px; font-size: 17px; line-height: 20px; font-weight: 300; letter-spacing: .08px; color: #6c7293; }

/* Taskbar */
.taskbar {
  display: flex;
  height: 60px;
  border-top: 1px solid #44484d;
  background: linear-gradient(90deg, #1f252a 0, #1d2329 340px, #12225a 450px, #191f47 560px, #1f2140 690px, #14224f 760px, #1e2038 900px, #1e2138 1000px, #1b2040 1130px, #17204b 1240px, #1a2143 1340px, #1f252b 1430px, #1f242b 1920px);
  font-family: "Open Sans", sans-serif;
  font-size: 14.200px;
}
.weather { display: flex; gap: 8px; width: 530px; padding: 12px 0 0 25px; }
.weather-text, .lang, .clock { display: flex; flex-direction: column; line-height: 20.500px; margin-top: -3.500px; }
.dim { color: #c4c6c8; }
.dock { display: flex; align-items: flex-start; }
.start { margin-top: 15px; }
.search {
  position: relative;
  display: flex;
  align-items: center;
  width: 275px;
  height: 40px;
  margin: 9px 2px 0 17px;
  padding-left: 14px;
  gap: 12px;
  border: 1px solid #565b73;
  border-radius: 20px;
  background: linear-gradient(90deg, #363a57, #3d3f5c 45%, #2f4064 65%, #33365a);
}
.search-text { margin-top: 1px; font-size: 16.300px; color: #d4d7df; }
.shells { margin: 10px 0 0 auto; margin-right: 3px; }
.app-icon {
  position: relative;
  display: flex;
  align-items: center;
  justify-content: center;
  width: 50px;
  height: 50px;
  margin: 4px 2.500px 0;
}
.current { border: 1px solid #353c5c; border-radius: 5px; background: #2a3152; }
.open::after, .current::after {
  content: "";
  position: absolute;
  left: 21px;
  bottom: 1px;
  width: 8px;
  height: 4px;
  border-radius: 2px;
  background: #9a9ca5;
}
.current::after { left: 14px; bottom: 0; width: 20px; background: #4cc2ff; }
.badge { position: absolute; right: 3px; top: 3px; }
.tray { display: flex; margin-left: auto; padding-right: 27px; }
.tray > svg:first-child { margin: 24px 26px 0 0; }
.lang { width: 29px; margin-top: 9px; align-items: center; }
.wifi { margin: 21px 10px 0 22px; }
.vol { margin: 21px 9px 0 0; }
.bat { margin: 22px 0 0; }
.clock { width: 77px; margin: 8.500px 12px 0 20px; align-items: flex-end; }
.clock span:last-child { letter-spacing: .2px; }
.bell { margin-top: 20px; }
```
